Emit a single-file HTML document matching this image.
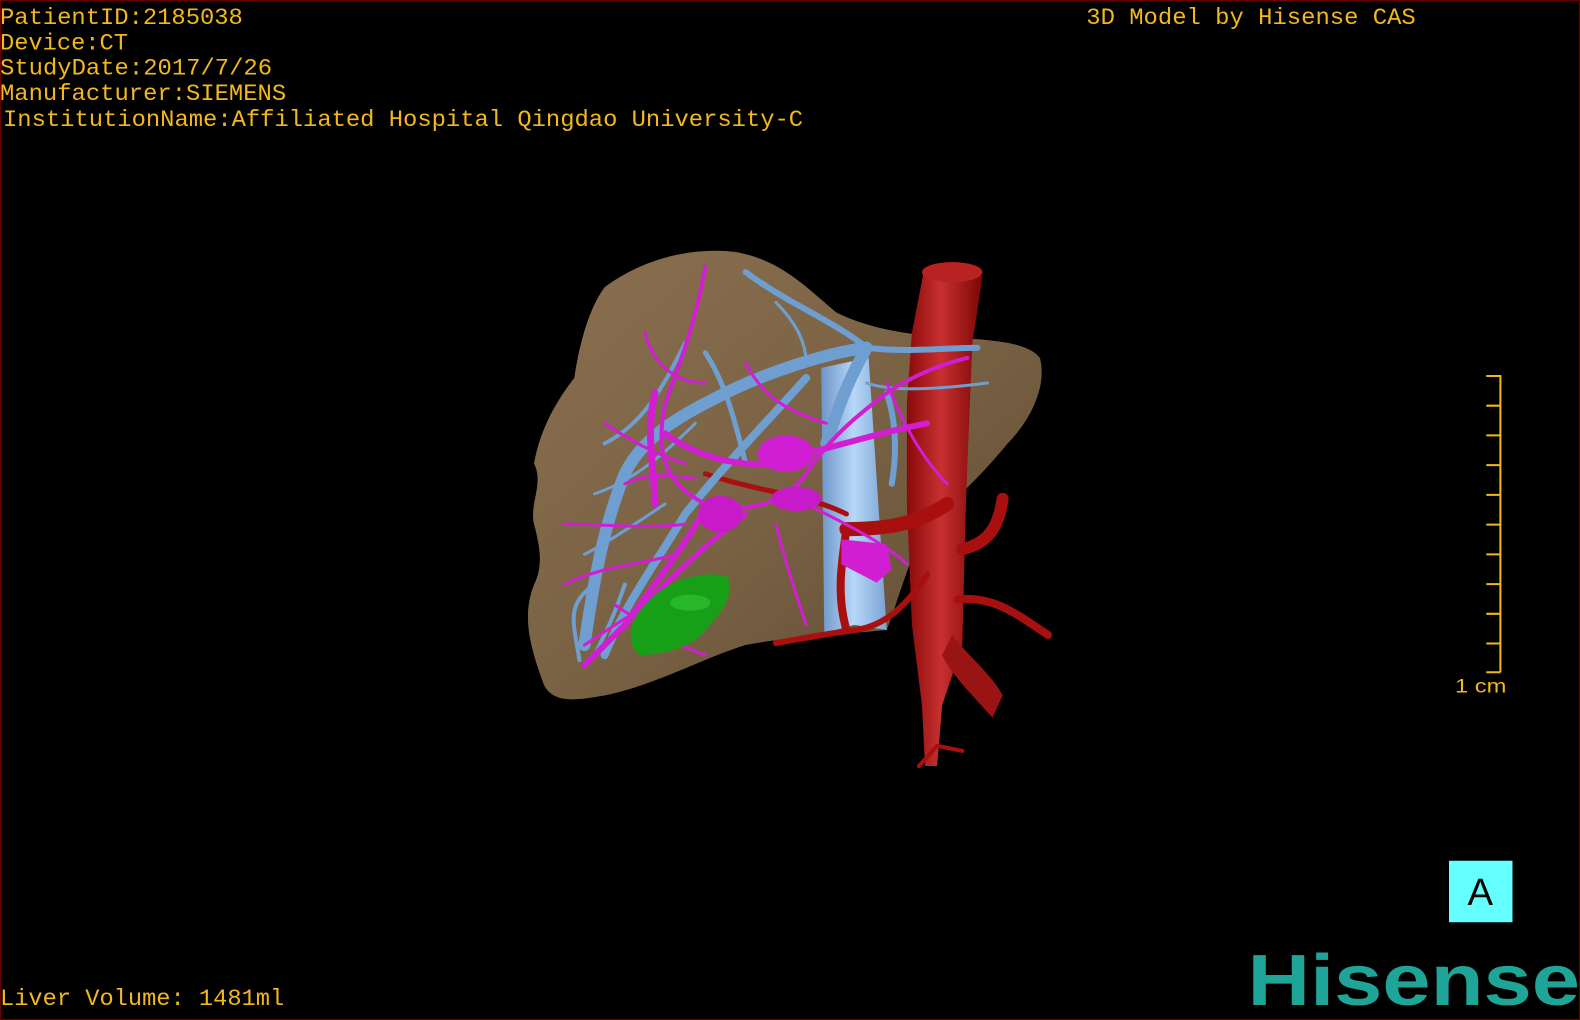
<!DOCTYPE html>
<html><head><meta charset="utf-8"><style>
html,body{margin:0;padding:0;background:#000;width:1580px;height:1020px;overflow:hidden}
svg{display:block}
.mono{font-family:"Liberation Mono",monospace}
</style></head><body>
<svg width="1580" height="1020" viewBox="0 0 1568 1012" preserveAspectRatio="none" xmlns="http://www.w3.org/2000/svg">
<defs>
<linearGradient id="lv" x1="0" y1="0" x2="1" y2="1">
<stop offset="0" stop-color="#8a7050"/><stop offset="0.5" stop-color="#7a6244"/><stop offset="1" stop-color="#5e4a32"/></linearGradient>
<linearGradient id="ao" x1="0" y1="0" x2="1" y2="0">
<stop offset="0" stop-color="#8a0a0a"/><stop offset="0.45" stop-color="#c83030"/><stop offset="1" stop-color="#7a0606"/></linearGradient>
<linearGradient id="ivc" x1="0" y1="0" x2="1" y2="0">
<stop offset="0" stop-color="#6d95c8"/><stop offset="0.5" stop-color="#b8d8f8"/><stop offset="1" stop-color="#7aa2d2"/></linearGradient>
</defs>
<rect x="0" y="0" width="1568" height="1012" fill="#000" stroke="#6a0000" stroke-width="2"/>
<g fill="#f2b81c" font-size="23" class="mono">
<text x="0" y="24" textLength="241" lengthAdjust="spacingAndGlyphs">PatientID:2185038</text>
<text x="0" y="49" textLength="127" lengthAdjust="spacingAndGlyphs">Device:CT</text>
<text x="0" y="74" textLength="270" lengthAdjust="spacingAndGlyphs">StudyDate:2017/7/26</text>
<text x="0" y="99" textLength="284" lengthAdjust="spacingAndGlyphs">Manufacturer:SIEMENS</text>
<text x="3" y="125" textLength="794" lengthAdjust="spacingAndGlyphs">InstitutionName:Affiliated Hospital Qingdao University-C</text>
<text x="1078" y="24" textLength="327" lengthAdjust="spacingAndGlyphs">3D Model by Hisense CAS</text>
<text x="0" y="997" textLength="282" lengthAdjust="spacingAndGlyphs">Liver Volume: 1481ml</text>
</g>
<text x="1444" y="687" style="font-family:'Liberation Sans',sans-serif;font-size:19px" fill="#f2b81c" textLength="51" lengthAdjust="spacingAndGlyphs">1 cm</text>
<g stroke="#f2b81c" stroke-width="2" fill="none">
<path d="M1489 372V667"/>
<path d="M1475 373H1489M1475 402.5H1489M1475 432H1489M1475 461.5H1489M1475 491H1489M1475 520.5H1489M1475 550H1489M1475 579.5H1489M1475 609H1489M1475 638.5H1489M1475 667H1489"/>
</g>
<rect x="1438" y="854" width="63" height="61" fill="#66ffff"/>
<text x="1469" y="898" style="font-family:'Liberation Sans',sans-serif;font-size:38px" fill="#000" text-anchor="middle">A</text>
<text x="1238" y="997" style="font-family:'Liberation Sans',sans-serif;font-weight:bold;font-size:72px" fill="#1fa598" textLength="330" lengthAdjust="spacingAndGlyphs">Hisense</text>

<!-- liver -->
<path d="M600 285 C640 255 690 245 730 250 C775 258 800 285 830 310 C860 325 900 333 950 335 C990 338 1020 340 1032 355 C1040 385 1020 420 1000 440 C975 470 955 490 920 520 C900 560 890 600 880 625 C830 630 780 632 740 640 C700 652 650 680 600 690 C570 695 550 698 540 680 C525 640 518 610 530 580 C540 560 535 540 530 520 C525 500 540 480 530 460 C535 430 550 400 570 375 C575 340 585 305 600 285 Z" fill="url(#lv)"/>

<!-- IVC light blue -->
<path d="M815 365 L862 355 L880 625 L848 620 L818 628 Z" fill="url(#ivc)"/>

<!-- aorta -->
<path d="M917 268 C935 258 965 262 975 275 L965 340 L960 460 L958 520 L955 640 L935 700 L930 760 L918 760 L915 700 L905 620 L900 500 L900 400 L905 330 Z" fill="url(#ao)"/>
<ellipse cx="945" cy="270" rx="30" ry="10" fill="#b82222"/>
<path d="M945 630 C960 650 985 670 995 690 L985 712 C965 690 945 670 935 650 Z" fill="#9a1414"/>
<g stroke="#a81010" fill="none" stroke-linecap="round">
<path d="M940 500 C910 520 880 525 840 525" stroke-width="14"/>
<path d="M955 545 C975 540 990 530 995 495" stroke-width="12"/>
<path d="M950 595 C985 590 1010 610 1040 630" stroke-width="8"/>
<path d="M920 570 C900 600 880 620 850 625 C810 630 790 635 770 638" stroke-width="6"/>
<path d="M840 525 C835 560 830 590 840 625" stroke-width="8"/>
<path d="M840 510 C800 490 760 490 700 470" stroke-width="5"/>
<path d="M930 740 L912 760 M930 740 L955 745" stroke-width="4"/>
</g>

<!-- blue veins -->
<g stroke="#6f9ed0" fill="none" stroke-linecap="round">
<path d="M860 345 C820 350 760 370 720 390 C680 410 640 430 620 470 C600 520 590 570 580 640" stroke-width="12"/>
<path d="M860 345 C840 380 830 410 820 440" stroke-width="12"/>
<path d="M860 345 C900 350 940 345 970 345" stroke-width="6"/>
<path d="M860 345 C830 320 780 300 740 270" stroke-width="6"/>
<path d="M800 375 C760 420 720 460 680 510 C650 560 620 600 600 650" stroke-width="8"/>
<path d="M880 390 C890 420 890 450 885 480" stroke-width="6"/>
<path d="M700 350 C720 380 730 420 740 460" stroke-width="5"/>
<path d="M680 340 C660 380 640 420 600 440" stroke-width="4"/>
<path d="M590 580 C560 600 570 620 575 655" stroke-width="4"/>
<path d="M690 420 C650 460 620 480 590 490" stroke-width="3"/>
<path d="M860 380 C890 390 940 385 980 380" stroke-width="3"/>
<path d="M770 300 C790 320 800 340 800 360" stroke-width="3"/>
<path d="M660 500 C630 520 600 540 580 550" stroke-width="3"/>
<path d="M620 580 C610 610 600 630 590 650" stroke-width="4"/>
</g>

<!-- magenta -->
<g stroke="#d21ed2" fill="none" stroke-linecap="round">
<path d="M700 265 C690 320 675 360 660 400 C650 450 660 480 700 500 C740 510 780 500 800 470 C820 440 840 420 880 390 C910 370 940 360 960 355" stroke-width="4"/>
<path d="M650 390 C640 430 650 470 650 500" stroke-width="7"/>
<path d="M660 430 C700 460 760 470 800 450 C840 440 870 430 920 420" stroke-width="6"/>
<path d="M700 505 C680 540 650 580 620 620 C600 640 590 650 580 660" stroke-width="6"/>
<path d="M740 510 C700 540 670 570 640 600" stroke-width="5"/>
<path d="M600 420 C630 440 650 450 680 460" stroke-width="3"/>
<path d="M560 520 C600 520 640 525 680 520" stroke-width="3"/>
<path d="M560 580 C600 560 640 560 670 550" stroke-width="3"/>
<path d="M640 330 C650 370 680 380 700 380" stroke-width="3"/>
<path d="M740 360 C760 400 790 410 820 420" stroke-width="3"/>
<path d="M800 500 C840 520 880 540 900 560" stroke-width="3"/>
<path d="M770 520 C780 560 790 590 800 620" stroke-width="3"/>
<path d="M610 600 C640 620 670 640 700 650" stroke-width="3"/>
<path d="M880 380 C900 430 920 460 940 480" stroke-width="3"/>
<path d="M580 640 C610 620 640 600 680 580" stroke-width="3"/>
<path d="M620 480 C640 470 660 470 690 475" stroke-width="3"/>
</g>
<ellipse cx="780" cy="450" rx="28" ry="18" fill="#d21ed2"/>
<ellipse cx="715" cy="510" rx="22" ry="18" fill="#c81ac8"/>
<ellipse cx="790" cy="495" rx="25" ry="12" fill="#c81ac8"/>
<path d="M835 535 L880 540 L885 565 L870 578 L835 560 Z" fill="#d21ed2"/>

<!-- green -->
<path d="M640 600 C660 575 700 565 722 572 C730 590 715 610 700 625 C690 640 660 650 635 650 C620 640 625 615 640 600 Z" fill="#17a017"/>
<ellipse cx="685" cy="598" rx="20" ry="8" fill="#30c030" opacity="0.7"/>
</svg>
</body></html>
